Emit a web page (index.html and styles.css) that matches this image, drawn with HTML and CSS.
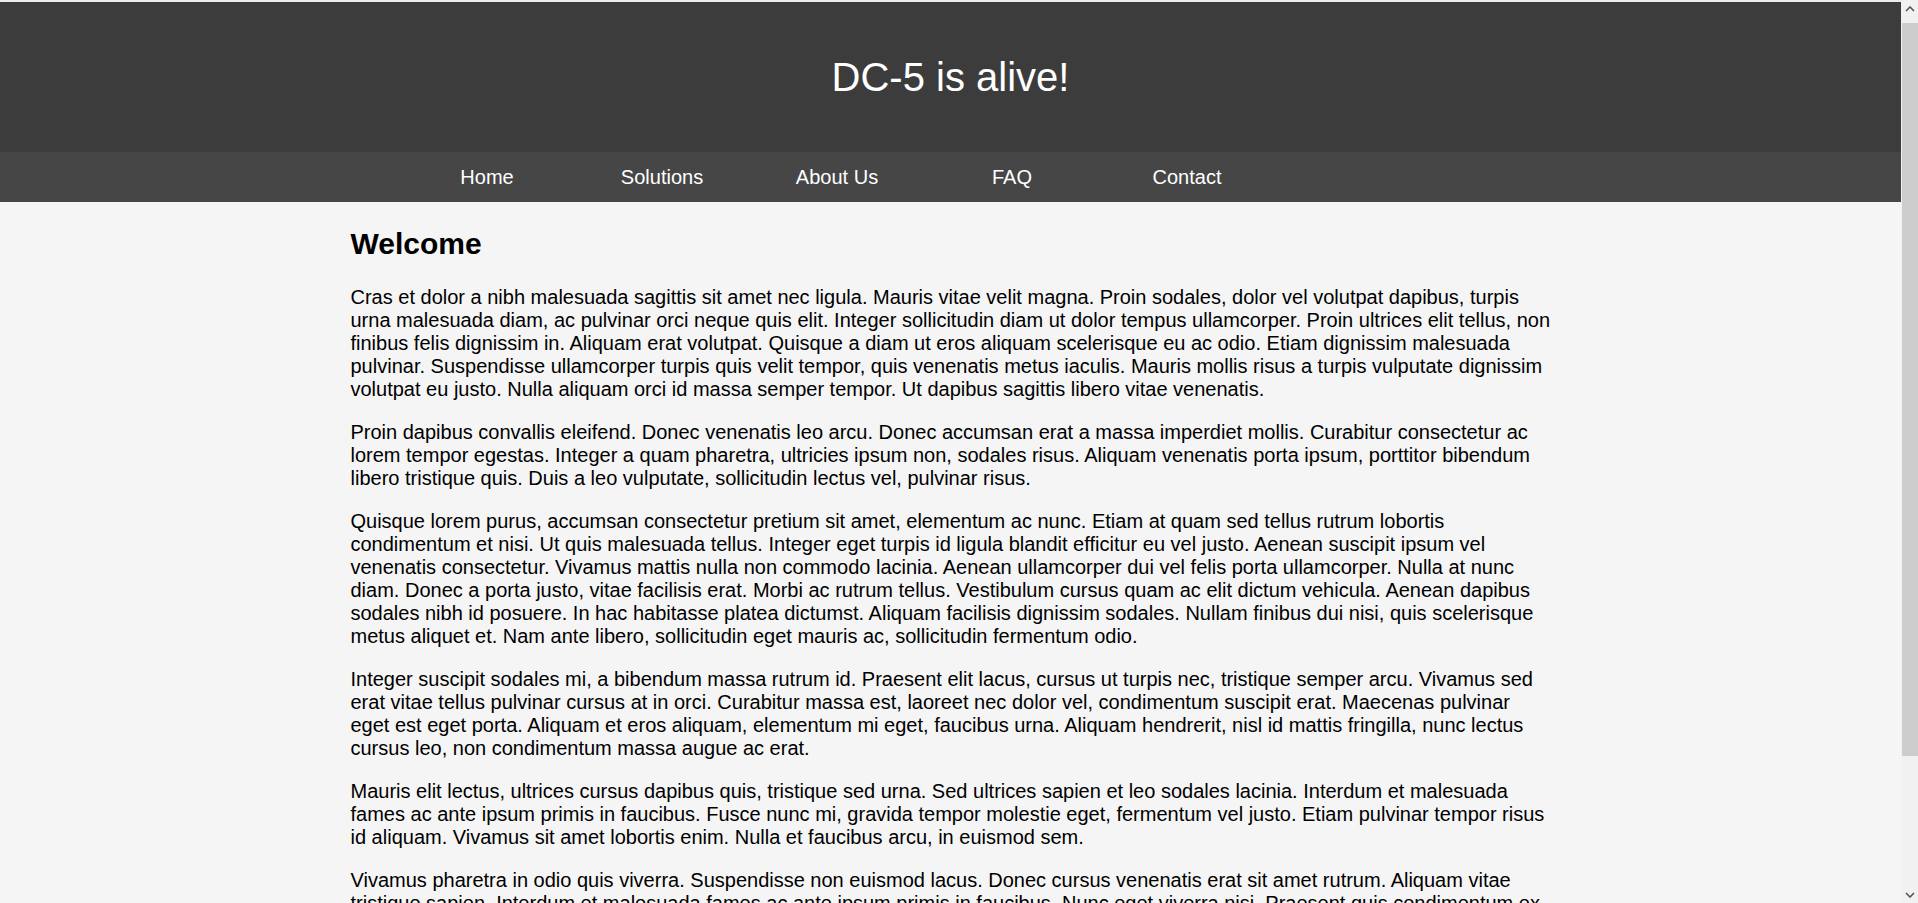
FILE: index.html
```html
<!DOCTYPE html>
<html lang="en">
<head>
<meta charset="utf-8">
<title>DC-5 is alive!</title>
<link rel="stylesheet" href="styles.css">
</head>
<body>
<header class="site-header">
  <h1 class="site-title">DC-5 is alive!</h1>
</header>
<nav class="site-nav">
  <ul class="nav-list">
    <li class="nav-item"><a class="nav-link" href="#">Home</a></li>
    <li class="nav-item"><a class="nav-link" href="#">Solutions</a></li>
    <li class="nav-item"><a class="nav-link" href="#">About Us</a></li>
    <li class="nav-item"><a class="nav-link" href="#">FAQ</a></li>
    <li class="nav-item"><a class="nav-link" href="#">Contact</a></li>
  </ul>
</nav>
<main class="content">
  <h2 class="content-title">Welcome</h2>
  <p>Cras et dolor a nibh malesuada sagittis sit amet nec ligula. Mauris vitae velit magna. Proin sodales, dolor vel volutpat dapibus, turpis urna malesuada diam, ac pulvinar orci neque quis elit. Integer sollicitudin diam ut dolor tempus ullamcorper. Proin ultrices elit tellus, non finibus felis dignissim in. Aliquam erat volutpat. Quisque a diam ut eros aliquam scelerisque eu ac odio. Etiam dignissim malesuada pulvinar. Suspendisse ullamcorper turpis quis velit tempor, quis venenatis metus iaculis. Mauris mollis risus a turpis vulputate dignissim volutpat eu justo. Nulla aliquam orci id massa semper tempor. Ut dapibus sagittis libero vitae venenatis.</p>
  <p>Proin dapibus convallis eleifend. Donec venenatis leo arcu. Donec accumsan erat a massa imperdiet mollis. Curabitur consectetur ac lorem tempor egestas. Integer a quam pharetra, ultricies ipsum non, sodales risus. Aliquam venenatis porta ipsum, porttitor bibendum libero tristique quis. Duis a leo vulputate, sollicitudin lectus vel, pulvinar risus.</p>
  <p>Quisque lorem purus, accumsan consectetur pretium sit amet, elementum ac nunc. Etiam at quam sed tellus rutrum lobortis condimentum et nisi. Ut quis malesuada tellus. Integer eget turpis id ligula blandit efficitur eu vel justo. Aenean suscipit ipsum vel venenatis consectetur. Vivamus mattis nulla non commodo lacinia. Aenean ullamcorper dui vel felis porta ullamcorper. Nulla at nunc diam. Donec a porta justo, vitae facilisis erat. Morbi ac rutrum tellus. Vestibulum cursus quam ac elit dictum vehicula. Aenean dapibus sodales nibh id posuere. In hac habitasse platea dictumst. Aliquam facilisis dignissim sodales. Nullam finibus dui nisi, quis scelerisque metus aliquet et. Nam ante libero, sollicitudin eget mauris ac, sollicitudin fermentum odio.</p>
  <p>Integer suscipit sodales mi, a bibendum massa rutrum id. Praesent elit lacus, cursus ut turpis nec, tristique semper arcu. Vivamus sed erat vitae tellus pulvinar cursus at in orci. Curabitur massa est, laoreet nec dolor vel, condimentum suscipit erat. Maecenas pulvinar eget est eget porta. Aliquam et eros aliquam, elementum mi eget, faucibus urna. Aliquam hendrerit, nisl id mattis fringilla, nunc lectus cursus leo, non condimentum massa augue ac erat.</p>
  <p>Mauris elit lectus, ultrices cursus dapibus quis, tristique sed urna. Sed ultrices sapien et leo sodales lacinia. Interdum et malesuada fames ac ante ipsum primis in faucibus. Fusce nunc mi, gravida tempor molestie eget, fermentum vel justo. Etiam pulvinar tempor risus id aliquam. Vivamus sit amet lobortis enim. Nulla et faucibus arcu, in euismod sem.</p>
  <p>Vivamus pharetra in odio quis viverra. Suspendisse non euismod lacus. Donec cursus venenatis erat sit amet rutrum. Aliquam vitae tristique sapien. Interdum et malesuada fames ac ante ipsum primis in faucibus. Nunc eget viverra nisi. Praesent quis condimentum ex, nec lobortis nibh. Sed vitae sem vel nisl tincidunt porta. Mauris eget sapien non lectus ultricies tincidunt.</p>
</main>
<div class="scrollbar" aria-hidden="true">
  <div class="sb-btn">
    <svg width="10" height="6" viewBox="0 0 10 6"><polyline points="1,5 5,1 9,5" fill="none" stroke="#555" stroke-width="1.6"/></svg>
  </div>
  <div class="sb-thumb"></div>
  <div class="sb-spacer"></div>
  <div class="sb-btn">
    <svg width="10" height="6" viewBox="0 0 10 6"><polyline points="1,1 5,5 9,1" fill="none" stroke="#555" stroke-width="1.6"/></svg>
  </div>
</div>
</body>
</html>
```

FILE: styles.css
```css
html {
  background: #f5f5f5;
}
body {
  margin: 0;
  padding-right: 17px;
  border-top: 2px solid #ececec;
  background: #f5f5f5;
  font-family: "Liberation Sans", Arial, sans-serif;
  font-size: 20px;
  color: #000;
}
.site-header {
  background: #3c3c3c;
  height: 150px;
  display: flex;
  align-items: center;
  justify-content: center;
}
.site-title {
  margin: 0;
  font-size: 40px;
  font-weight: normal;
  color: #fff;
}
.site-nav {
  background: #464646;
  height: 50px;
}
.nav-list {
  list-style: none;
  margin: 0 auto;
  padding: 0 0 0 49px;
  width: 1200px;
  box-sizing: border-box;
  height: 100%;
  display: flex;
  align-items: center;
}
.nav-item {
  width: 175px;
  text-align: center;
}
.nav-link {
  color: #fff;
  text-decoration: none;
}
.content {
  width: 1200px;
  margin: 0 auto;
}
.content-title {
  font-size: 30px;
  margin: 0.83em 0;
}
.content p {
  margin: 20px 0;
}
.scrollbar {
  position: fixed;
  top: 0;
  right: 0;
  width: 17px;
  height: 100vh;
  background: #f1f1f1;
  display: flex;
  flex-direction: column;
}
.sb-btn {
  height: 17px;
  display: flex;
  align-items: center;
  justify-content: center;
  flex: none;
}
.sb-thumb {
  margin-top: 6px;
  margin-left: 1px;
  height: 733px;
  background: #cdcdcd;
  flex: none;
}
.sb-spacer {
  flex: 1;
}
```
